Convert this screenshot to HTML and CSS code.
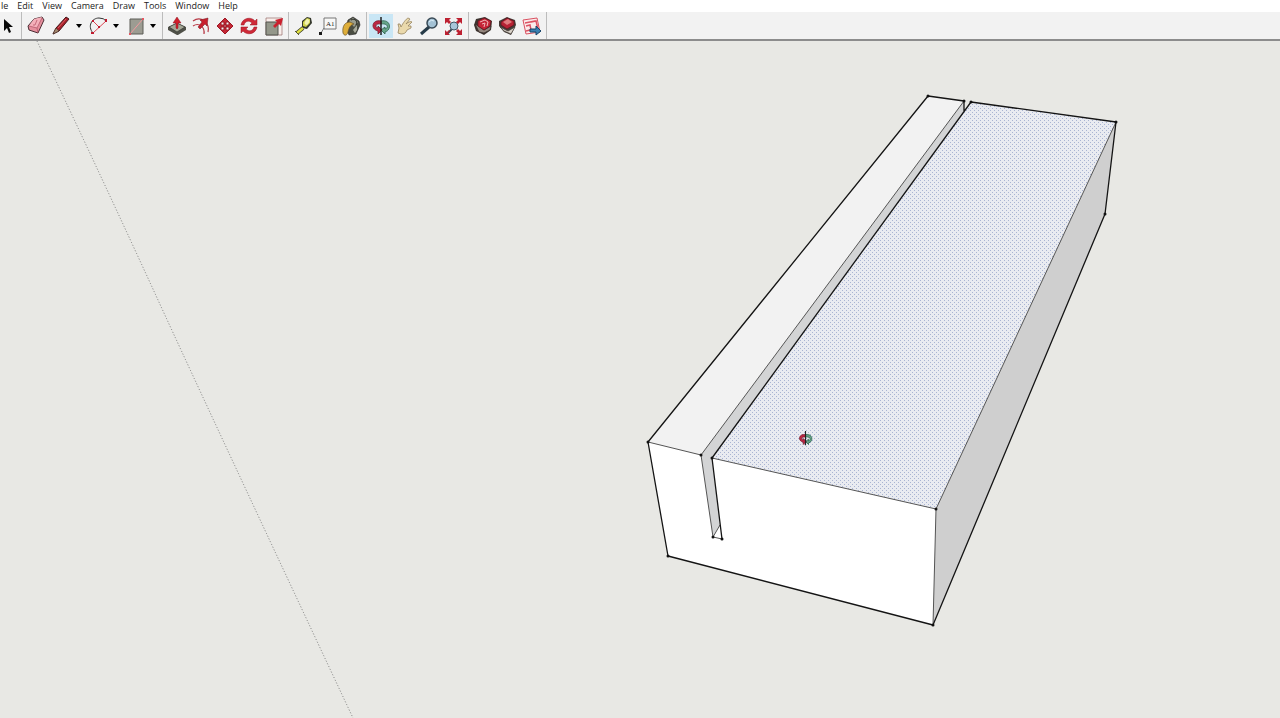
FILE: index.html
```html
<!DOCTYPE html>
<html lang="en">
<head>
<meta charset="utf-8">
<title>SketchUp</title>
<link rel="stylesheet" href="styles.css">
</head>
<body>
<header>
<nav class="menu" aria-label="Menu bar">
<button>le</button><button>Edit</button><button>View</button><button>Camera</button><button>Draw</button><button>Tools</button><button>Window</button><button>Help</button>
</nav>
<div class="toolbar" role="toolbar" aria-label="Getting started">
<div class="group">
<button class="tool" aria-label="Select"><svg viewBox="0 0 24 24"><path d="M10 5v12l3-3 2 5 2-1-2-5h4z" fill="#080808"/></svg></button>
</div>
<div class="group draw">
<button class="tool" aria-label="Eraser"><svg viewBox="0 0 24 24"><path d="M10 5l8-2 2 3-6 13-9-3-1-4z" fill="#e58f9d" stroke="#4a2d33"/><path d="M10 5l8-2-5 11-8-2z" fill="#f4b0ba"/><path d="M5 12l8 2 5-10M13 14l1 5" fill="none" stroke="#b55a6c" stroke-width=".8"/><path d="M13 6l-2 5h-2" fill="none" stroke="#c46b7b"/></svg></button>
<div class="split"><button class="tool" aria-label="Line"><svg viewBox="0 0 24 24"><path d="M4 20l3-6L17 3l3 2L10 17z" fill="#a81f2a" stroke="#44171a"/><path d="M4 20l3-6 3 3z" fill="#a58a70" stroke="#3d2a24" stroke-width=".5"/><path d="M9 14l8-9" stroke="#dd5f63"/></svg></button><button class="caret" aria-label="Line tools"><svg viewBox="0 0 12 24"><path d="M3 10h6l-3 4z"/></svg></button></div>
<div class="split"><button class="tool" aria-label="Arc"><svg viewBox="0 0 24 24"><path d="M7 19C1 12 6 4 13 4q5 0 7 3" fill="none" stroke="#333"/><path d="M7 19L20 7M7 7l6 6" fill="none" stroke="#dc4a56"/><path d="M5 18h3v2H5zM19 5h2v3h-2zM6 6h2v2H6zM12 12h2v2h-2z" fill="#c01c30"/></svg></button><button class="caret" aria-label="Arc tools"><svg viewBox="0 0 12 24"><path d="M3 10h6l-3 4z"/></svg></button></div>
<div class="split"><button class="tool" aria-label="Rectangle"><svg viewBox="0 0 24 24"><path d="M7 5h13v15H7z" fill="#9c9c92" stroke="#5c5c56"/><path d="M7 20L20 5" stroke="#f09a9e"/><path d="M6 19h2v2H6zM19 4h2v2h-2z" fill="#e45561"/></svg></button><button class="caret" aria-label="Shape tools"><svg viewBox="0 0 12 24"><path d="M3 10h6l-3 4z"/></svg></button></div>
</div>
<div class="group">
<button class="tool" aria-label="Push/Pull"><svg viewBox="0 0 24 24"><path d="M3 13l9-4 9 4v3l-8 5h-1l-9-5z" fill="#4f5048"/><path d="M4 13l8-4 8 4-8 5z" fill="#a4a696" stroke="#343630" stroke-width=".7"/><path d="M11 14V9H8l4-6 4 6h-3v5l-1 1z" fill="#cf1f2b" stroke="#8c1722" stroke-width=".5"/></svg></button>
<button class="tool" aria-label="Offset"><svg viewBox="0 0 24 24"><path d="M4 7c8-6 17 2 15 11M4 12c6-4 12 1 11 8" fill="none" stroke="#b83a46" stroke-width="1.200"/><path d="M9 13l4-5-2-2 8-2-1 8-2-2-5 5z" fill="#c8202e" stroke="#721721" stroke-width=".5"/></svg></button>
<button class="tool" aria-label="Move"><svg viewBox="0 0 24 24"><path d="M12 4l4 4h-3v3h-2V8H8zM12 20l-4-4h3v-3h2v3h3zM4 12l4-4v3h3v2H8v3zM20 12l-4 4v-3h-3v-2h3V8z" fill="#c62735" stroke="#9c1825" stroke-width="1"/></svg></button>
<button class="tool" aria-label="Rotate"><svg viewBox="0 0 24 24"><path d="M4 11c1-7 10-9 14-4l2-2v6h-7l2-2c-3-3-7-2-8 2zM20 13c-1 7-10 9-14 4l-2 2v-6h7l-2 2c3 3 7 2 8-2z" fill="#cf2937" stroke="#961826" stroke-width=".5"/></svg></button>
<button class="tool" aria-label="Scale"><svg viewBox="0 0 24 24"><path d="M5 4h16v17H5z" fill="#f8eeeb" stroke="#986f6c" stroke-width=".7"/><path d="M5 8h12v13H5z" fill="#94978a" stroke="#51534d"/><path d="M12 12l4-4-2-2 8-2-2 8-2-2-4 4z" fill="#cb202e"/></svg></button>
</div>
<div class="group">
<button class="tool" aria-label="Tape measure"><svg viewBox="0 0 24 24"><path d="M11 7l5-4 4 1 1 5-5 6-5-1z" fill="#35382c"/><path d="M12 8l4-4 3 1v4l-4 4-3-1z" fill="#d0d249"/><ellipse cx="16" cy="8" rx="2" ry="3" fill="#f2f2b1" transform="rotate(30 16 8)"/><path d="M12 14l-6 5" stroke="#373823" stroke-width="4"/><path d="M12 14l-6 5" stroke="#e0e040" stroke-width="2.500"/><path d="M4 17l4 4" stroke="#55552a"/></svg></button>
<button class="tool" aria-label="Text"><svg viewBox="0 0 24 24"><path d="M9 4h12v11H9zM9 14l-3 5" fill="#f8f8f7" stroke="#777"/><path d="M4 18h3v3H4z" fill="#181818"/><text class="label-glyph" x="11" y="12">A1</text></svg></button>
<button class="tool" aria-label="Paint bucket"><svg viewBox="0 0 24 24"><path d="M9 6l5-3 6 4 1 4-4 9-7 1-3-7z" fill="#4a4d42" stroke="#222" stroke-width=".6"/><path d="M10 7l4-3 5 4-4 5z" fill="#989b8c"/><path d="M14 16l4-5v5l-2 3z" fill="#a9ab9c"/><path d="M4 19c-1-7 2-11 7-11l4 2c-4 1-5 4-6 8-1 4-4 4-5 1z" fill="#deae3a" stroke="#66502a" stroke-width=".7"/><path d="M12 6c4-2 7 1 5 5" fill="none" stroke="#292b26"/></svg></button>
</div>
<div class="group">
<button class="tool active" aria-label="Orbit" aria-pressed="true"><svg viewBox="0 0 24 24"><path d="M12 7c10-2 11 9 4 11v2l-4-4 4-3v2c4-1 3-6-4-5z" fill="#66a68a" stroke="#2b6049" stroke-width=".8"/><path d="M12 7C3 5 1 15 9 17v3l4-4-4-4v2c-4-1-2-5 3-4z" fill="#bd2744" stroke="#781a2b" stroke-width=".8"/><path d="M12 3v18" stroke="#222" stroke-width="1.500"/></svg></button>
<button class="tool" aria-label="Pan"><svg viewBox="0 0 24 24"><path d="M5 19l1-5-1-4 2 0 1 3c2-4 5-8 7-9l2 1-4 5c2-2 5-3 6-2l-4 4 3 0 0 2-4 2c-1 3-3 4-6 4z" fill="#ead9ac" stroke="#97845e" stroke-width=".8"/></svg></button>
<button class="tool" aria-label="Zoom"><svg viewBox="0 0 24 24"><path d="M12 13l-8 7" stroke="#263b48" stroke-width="3"/><circle cx="15" cy="9" r="5" fill="#a4c2d5" stroke="#384955" stroke-width="1.500"/><path d="M12 8q2-3 5-1" fill="none" stroke="#def0fa"/></svg></button>
<button class="tool" aria-label="Zoom extents"><svg viewBox="0 0 24 24"><path d="M11 15l-5 5" stroke="#344753" stroke-width="2"/><circle cx="13" cy="12" r="4" fill="#a7c6d9" stroke="#405563"/><path d="M4 4h6L8 6l2 2-2 2-2-2-2 2zM21 4v6l-2-2-2 2-2-2 2-2-2-2zM4 21v-5l2 2 2-2 1 1-2 2 2 2zM21 21h-6l2-2-2-2 2-2 2 2 2-2z" fill="#bd2031"/></svg></button>
</div>
<div class="group">
<button class="tool" aria-label="3D Warehouse"><svg viewBox="0 0 24 24"><path d="M5 5l9-2 7 4-1 9-7 5-8-4-2-6z" fill="#3c332f"/><path d="M4 10l4 8 5 1 6-3 1-4-7 4z" fill="#93877e" stroke="#332a26" stroke-width=".7"/><path d="M7 7l6-3 7 3-1 5-6 4-6-4z" fill="#c52436" stroke="#6a1821" stroke-width=".8"/><path d="M9 8l5-2 3 2-1 4M11 10l3-1-1 4" fill="none" stroke="#f0b7b9"/></svg></button>
<button class="tool" aria-label="Share model"><svg viewBox="0 0 24 24"><path d="M4 7l8-4 8 3 1 5-5 10-7-3-5-6z" fill="#443c38"/><path d="M5 13l8 4 7-4-4 7-7-3z" fill="#d8d1c8" stroke="#443c38" stroke-width=".7"/><path d="M6 8l6-4 7 3v4l-7 4-6-4z" fill="#b72234" stroke="#5e1720" stroke-width=".8"/><path d="M8 8l5-3 4 3-5 3z" fill="#df7b7e"/></svg></button>
<button class="tool" aria-label="Send to LayOut"><svg viewBox="0 0 24 24"><path d="M4 6l14-2 3 14-14 2z" fill="#fbecec" stroke="#da5161"/><path d="M6 9l10-2M7 12l4-1 1 5M12 8l5-1 2 8M7 17l4-1" fill="none" stroke="#dc5363" stroke-width="1.500"/><path d="M11 15h6v-3l5 5-5 4v-3h-6z" fill="#397fb0" stroke="#174469"/></svg></button>
</div>
</div>
</header>
<main>
<svg class="scene" viewBox="0 41 1280 677" preserveAspectRatio="xMinYMin slice" role="img" aria-label="Grooved block with selected top face">
<defs><pattern id="dots" width="4" height="4" patternUnits="userSpaceOnUse"><path d="M0 0h1v1H0zM2 2h1v1H2z" fill="#a9b4d2"/></pattern></defs>
<path class="guide" d="M37 41Q103 180 158 300T353 718"/>
<path d="M928 96L964 101V111L971 102L1116 122L1105 214L933 625L668 556L648 442z" fill="#fff"/>
<path d="M928 96L964 101L701 455L648 442z" fill="#f2f2f2"/>
<path d="M964 101V111L712 458L720 525L713 537L701 455z" fill="#d3d4d5"/>
<path d="M971 102L1116 122L936 509L712 458z" fill="#e9ebf1"/>
<path d="M971 102L1116 122L936 509L712 458z" fill="url(#dots)"/>
<path d="M1116 122L1105 214L933 625L936 509z" fill="#cfcfcf"/>
<g class="thin"><path d="M964 101L701 455L713 537L720 525M648 442L701 455M712 458L936 509L1116 122M936 509L933 625M713 537L722 539"/></g>
<g class="edge"><path d="M964 111V101L928 96L648 442L668 556L933 625L1105 214L1116 122L971 102L712 458L722 539"/></g>
<g class="points"><circle cx="928" cy="96" r="1.500"/><circle cx="964" cy="101" r="1.500"/><circle cx="971" cy="102" r="1.500"/><circle cx="1116" cy="122" r="1.500"/><circle cx="1105" cy="214" r="1.500"/><circle cx="648" cy="442" r="1.500"/><circle cx="701" cy="455" r="1.500"/><circle cx="712" cy="458" r="1.500"/><circle cx="936" cy="509" r="1.500"/><circle cx="668" cy="556" r="1.500"/><circle cx="933" cy="625" r="1.500"/><circle cx="713" cy="537" r="1.500"/><circle cx="722" cy="539" r="1.500"/></g>
<svg x="798" y="431" width="15" height="15" viewBox="2 2 20 20"><path d="M12 7c10-2 11 9 4 11v2l-4-4 4-3v2c4-1 3-6-4-5z" fill="#66a68a" stroke="#2b6049"/><path d="M12 7C3 5 1 15 9 17v3l4-4-4-4v2c-4-1-2-5 3-4z" fill="#bd2744" stroke="#781a2b"/><path d="M12 2v19" stroke="#222" stroke-width="1.500"/></svg>
</svg>
</main>
</body>
</html>
```
FILE: styles.css
```css
* { box-sizing: border-box; }
body {
  margin: 0;
  min-height: 100vh;
  display: flex;
  flex-direction: column;
  overflow: hidden;
  background: #e8e8e4;
  font-family: "Open Sans", "Noto Sans", sans-serif;
}
button {
  margin: 0;
  padding: 0;
  border: 0;
  background: transparent;
  color: #222;
  font: inherit;
}
.menu {
  display: flex;
  gap: 9px;
  height: 12px;
  padding-left: 1px;
  background: #fff;
  font-size: 9px;
  line-height: 11px;
}
.menu button { height: 11px; }
.toolbar {
  display: flex;
  height: 29px;
  background: #f2f2f2;
  border-bottom: 2px solid #8c8c8c;
}
.group {
  display: flex;
  align-items: center;
  padding: 0 3px 0 2px;
  border-right: 1px solid #bcbcbc;
}
.group:first-child { margin-left: -8px; }
.draw { gap: 1px; }
.split { display: flex; }
.tool { width: 24px; height: 24px; }
.tool svg, .caret svg { display: block; width: 100%; height: 24px; }
.caret { width: 12px; }
.active { background: #c9e6f5; }
.label-glyph { font: 7px "Liberation Serif", serif; fill: #222; }
main { flex: 1; display: flex; min-height: 0; }
.scene { display: block; width: 100%; height: auto; }
.guide { fill: none; stroke: #777; stroke-width: 1; stroke-dasharray: 1 2; }
.thin { fill: none; stroke: #555; stroke-width: 1; }
.edge { fill: none; stroke: #141414; stroke-width: 1.3; stroke-linejoin: round; }
.points { fill: #111; }
```
